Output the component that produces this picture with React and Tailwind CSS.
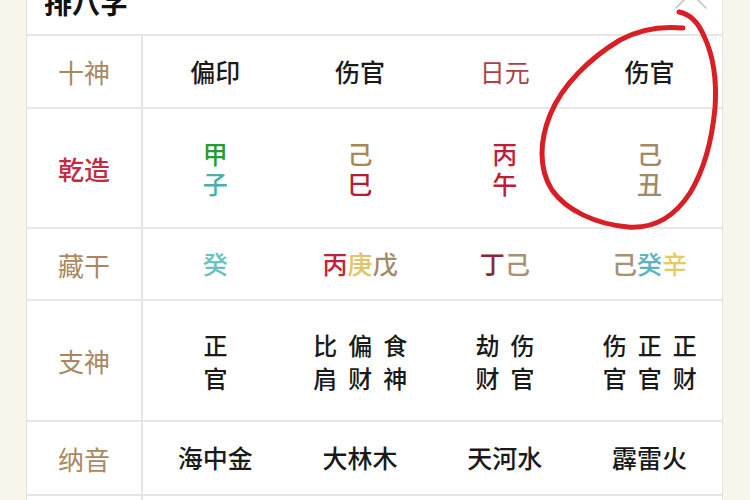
import React from 'react';

const TAN = 'text-[#a8895f]';

const rows = [
  { label: '十神', labelColor: TAN, h: 'h-[73px]', cells: 'shishen' },
  { label: '乾造', labelColor: 'text-[#c52a3e] font-medium', h: 'h-[120px]', cells: 'qianzao' },
  { label: '藏干', labelColor: TAN, h: 'h-[72px]', cells: 'canggan' },
  { label: '支神', labelColor: TAN, h: 'h-[121px]', cells: 'zhishen' },
  { label: '纳音', labelColor: TAN, h: 'h-[74px]', cells: 'nayin' },
];

const Stack = ({ top, bottom, topColor, bottomColor }) => (
  <div className="flex flex-col items-center leading-[30px] font-medium">
    <span className={topColor}>{top}</span>
    <span className={bottomColor}>{bottom}</span>
  </div>
);

const Pairs = ({ cols }) => (
  <div className="flex gap-[11px] text-[24px] leading-[33px] text-[#1a1a1a]">
    {cols.map((c, i) => (
      <div key={i} className="flex flex-col items-center">
        <span>{c[0]}</span>
        <span>{c[1]}</span>
      </div>
    ))}
  </div>
);

const cellsFor = (key) => {
  switch (key) {
    case 'shishen':
      return [
        <span className="text-[#1a1a1a]">偏印</span>,
        <span className="text-[#1a1a1a]">伤官</span>,
        <span className="text-[#ad3f4d] font-normal">日元</span>,
        <span className="text-[#1a1a1a]">伤官</span>,
      ];
    case 'qianzao':
      return [
        <Stack top="甲" bottom="子" topColor="text-[#2b9b30]" bottomColor="text-[#4cb0aa]" />,
        <Stack top="己" bottom="巳" topColor="text-[#a88955]" bottomColor="text-[#b51d30]" />,
        <Stack top="丙" bottom="午" topColor="text-[#bd1f38]" bottomColor="text-[#bd1f38]" />,
        <Stack top="己" bottom="丑" topColor="text-[#a08a68]" bottomColor="text-[#a08a68]" />,
      ];
    case 'canggan':
      return [
        <span className="text-[#69c1c1]">癸</span>,
        <span>
          <span className="text-[#bc2535]">丙</span>
          <span className="text-[#e1c36c]">庚</span>
          <span className="text-[#a28b69]">戊</span>
        </span>,
        <span>
          <span className="text-[#8b2636]">丁</span>
          <span className="text-[#a89070]">己</span>
        </span>,
        <span>
          <span className="text-[#a89070]">己</span>
          <span className="text-[#5ab6be]">癸</span>
          <span className="text-[#e4cd60]">辛</span>
        </span>,
      ];
    case 'zhishen':
      return [
        <Pairs cols={[['正', '官']]} />,
        <Pairs cols={[['比', '肩'], ['偏', '财'], ['食', '神']]} />,
        <Pairs cols={[['劫', '财'], ['伤', '官']]} />,
        <Pairs cols={[['伤', '官'], ['正', '官'], ['正', '财']]} />,
      ];
    default:
      return ['海中金', '大林木', '天河水', '霹雷火'].map((t) => (
        <span className="text-[#1a1a1a]">{t}</span>
      ));
  }
};

const App = () => {
  return (
    <div
      className="relative w-[750px] h-[500px] overflow-hidden bg-[#f7f5ec] flex"
      style={{ fontFamily: '"Noto Sans CJK SC", "Noto Sans", sans-serif' }}
    >
      <div className="ml-[26px] w-[697px] h-full bg-white border-x border-[#e4e2dc] flex flex-col">
        {/* title bar */}
        <div className="h-[36px] shrink-0 border-b-2 border-[#e6e6e6] overflow-hidden px-[17px]">
          <div className="mt-[-12px] text-[28px] leading-[28px] font-bold text-[#111]">排八字</div>
        </div>

        {rows.map((r) => (
          <div
            key={r.label}
            className={`grid grid-cols-[116px_1fr_1fr_1fr_1fr] shrink-0 border-b-2 border-[#e6e6e6] ${r.h}`}
          >
            <div className={`flex items-center justify-center border-r-2 border-[#e6e6e6] text-[26px] ${r.labelColor}`}>
              {r.label}
            </div>
            {cellsFor(r.cells).map((c, i) => (
              <div key={i} className="flex items-center justify-center text-[25px] font-medium">
                {c}
              </div>
            ))}
          </div>
        ))}

        <div className="grid grid-cols-[116px_1fr] flex-1">
          <div className="border-r-2 border-[#e6e6e6]" />
          <div />
        </div>
      </div>

      {/* close mark, mostly cut off */}
      <svg className="absolute left-0 top-0" width="750" height="500" viewBox="0 0 750 500" fill="none">
        <path d="M676 8 L691 -7 L706 8" stroke="#c4c4c4" strokeWidth="1.6" strokeLinecap="round" />
        <path
          d="M683 28 C662 26 640 29 620 40 C590 58 562 85 550 115 C540 140 538 168 552 190 C566 210 595 224 628 227 C655 229 675 216 690 193 C704 170 712 140 715 108 C717 80 713 55 704 36 C698 22 690 14 679 12"
          stroke="#d81f26"
          strokeWidth="5"
          strokeLinecap="round"
          strokeLinejoin="round"
        />
      </svg>
    </div>
  );
};

export default App;
